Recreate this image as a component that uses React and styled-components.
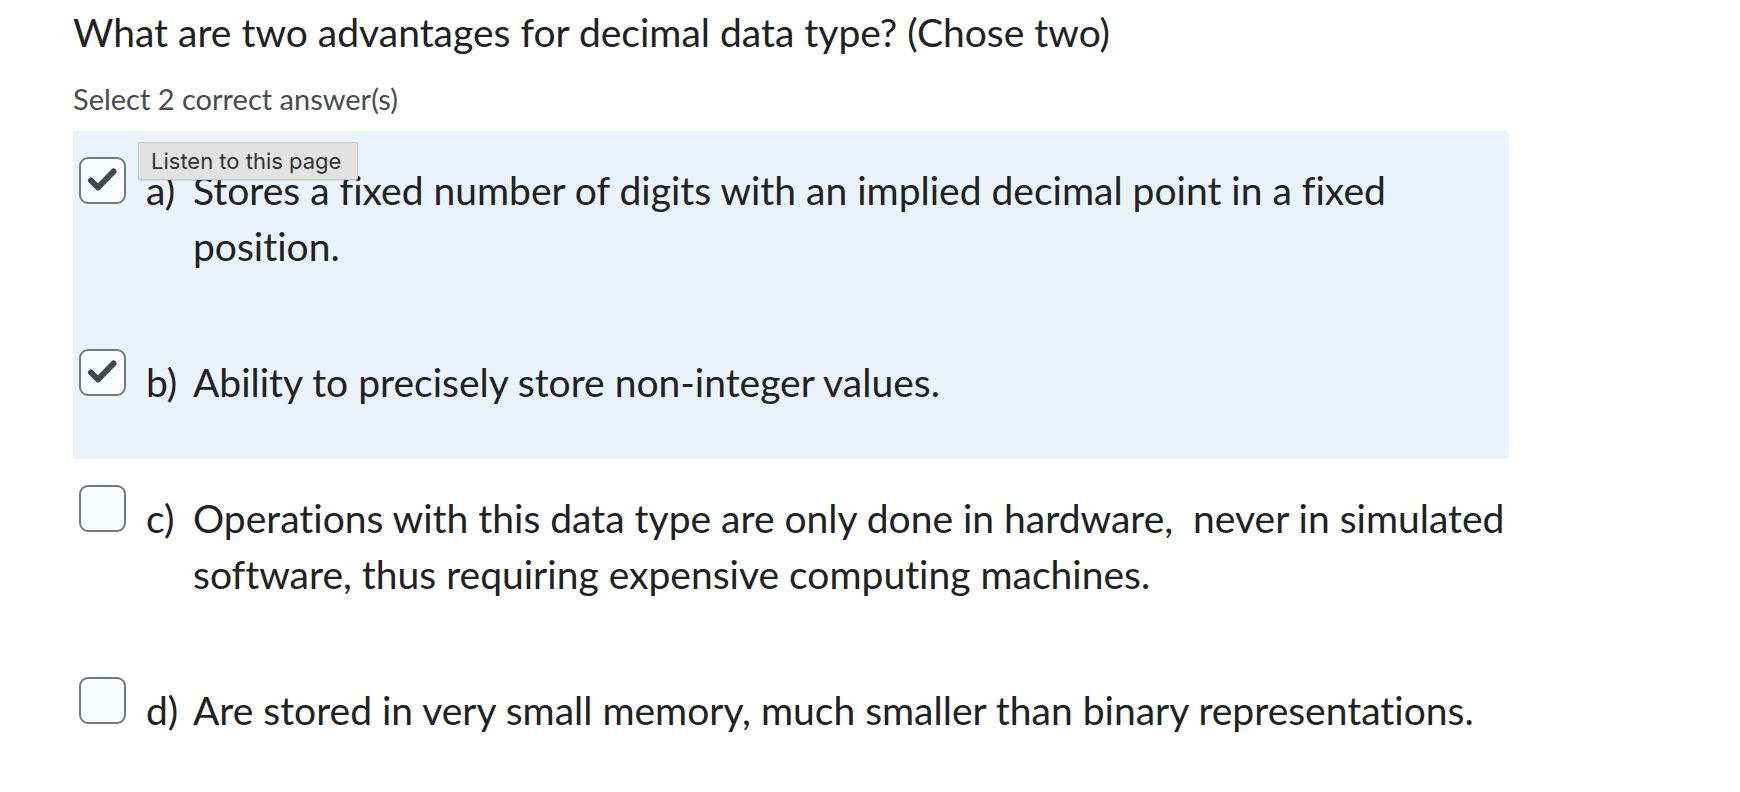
import React from "react";
import styled, { createGlobalStyle } from "styled-components";

const Global = createGlobalStyle`
  html, body { margin: 0; padding: 0; background: #ffffff; }
  body {
    font-family: Lato, "Noto Sans", sans-serif;
    font-variant-ligatures: none;
    font-feature-settings: "liga" 0, "clig" 0, "dlig" 0;
    -webkit-font-smoothing: antialiased;
  }
`;

const Page = styled.div`
  position: relative;
  width: 1740px;
  height: 792px;
  padding: 9px 0 0 73px;
  box-sizing: border-box;
  overflow: hidden;
`;

const Title = styled.h1`
  margin: 0;
  font-family: Lato, sans-serif;
  font-weight: 400;
  font-size: 39px;
  line-height: 47px;
  color: #202122;
`;

const Subtitle = styled.p`
  margin: 25px 0 0;
  font-family: Lato, sans-serif;
  font-size: 29px;
  line-height: 35px;
  color: #494c4e;
`;

const List = styled.div`
  margin-top: 15px;
  width: 1436px;
  display: flex;
  flex-direction: column;
`;

const Option = styled.div`
  position: relative;
  display: flex;
  align-items: flex-start;
  padding: 26px 0 49px 6px;
  background: ${(p) => (p.$selected ? "#eaf2fc" : "transparent")};
`;

const Box = styled.span`
  flex: 0 0 auto;
  width: 47px;
  height: 47px;
  box-sizing: border-box;
  border: 2px solid #75797c;
  border-radius: 9px;
  background: #f9fbff;
  display: flex;
  align-items: center;
  justify-content: center;
`;

const Letter = styled.span`
  flex: 0 0 47px;
  margin: 5px 0 0 20px;
  font-size: 39px;
  line-height: 56px;
  color: #202122;
`;

const Text = styled.span`
  flex: 1 1 auto;
  margin-top: 5px;
  font-size: 39px;
  line-height: 56px;
  color: #202122;
`;

const Tooltip = styled.div`
  position: absolute;
  left: 65px;
  top: 11px;
  width: 220px;
  height: 38px;
  box-sizing: border-box;
  padding-left: 12px;
  display: flex;
  align-items: center;
  background: #e2e2e2;
  border: 1px solid #c9c9c9;
  border-radius: 2px;
  box-shadow: 0 1px 2px rgba(0, 0, 0, 0.12);
  font-family: Inter, "Liberation Sans", sans-serif;
  font-size: 22px;
  color: #333333;
  white-space: nowrap;
`;

const Check = () => (
  <svg width="43" height="43" viewBox="0 0 43 43" aria-hidden="true">
    <path
      d="M10 21.5 L17 28.5 L32.5 12.5"
      fill="none"
      stroke="#45484a"
      strokeWidth="6"
      strokeLinecap="round"
      strokeLinejoin="round"
    />
  </svg>
);

const options = [
  {
    key: "a)",
    text: "Stores a fixed number of digits with an implied decimal point in a fixed position.",
    checked: true,
  },
  { key: "b)", text: "Ability to precisely store non-integer values.", checked: true },
  {
    key: "c)",
    text: "Operations with this data type are only done in hardware,\u00a0 never in simulated software, thus requiring expensive computing machines.",
    checked: false,
  },
  {
    key: "d)",
    text: "Are stored in very small memory, much smaller than binary representations.",
    checked: false,
  },
];

export default function App() {
  return (
    <>
      <Global />
      <Page>
        <Title>What are two advantages for decimal data type? (Chose two)</Title>
        <Subtitle>Select 2 correct answer(s)</Subtitle>
        <List>
          {options.map((o, i) => (
            <Option key={o.key} $selected={o.checked}>
              <Box>{o.checked && <Check />}</Box>
              <Letter>{o.key}</Letter>
              <Text>{o.text}</Text>
              {i === 0 && <Tooltip>Listen to this page</Tooltip>}
            </Option>
          ))}
        </List>
      </Page>
    </>
  );
}
